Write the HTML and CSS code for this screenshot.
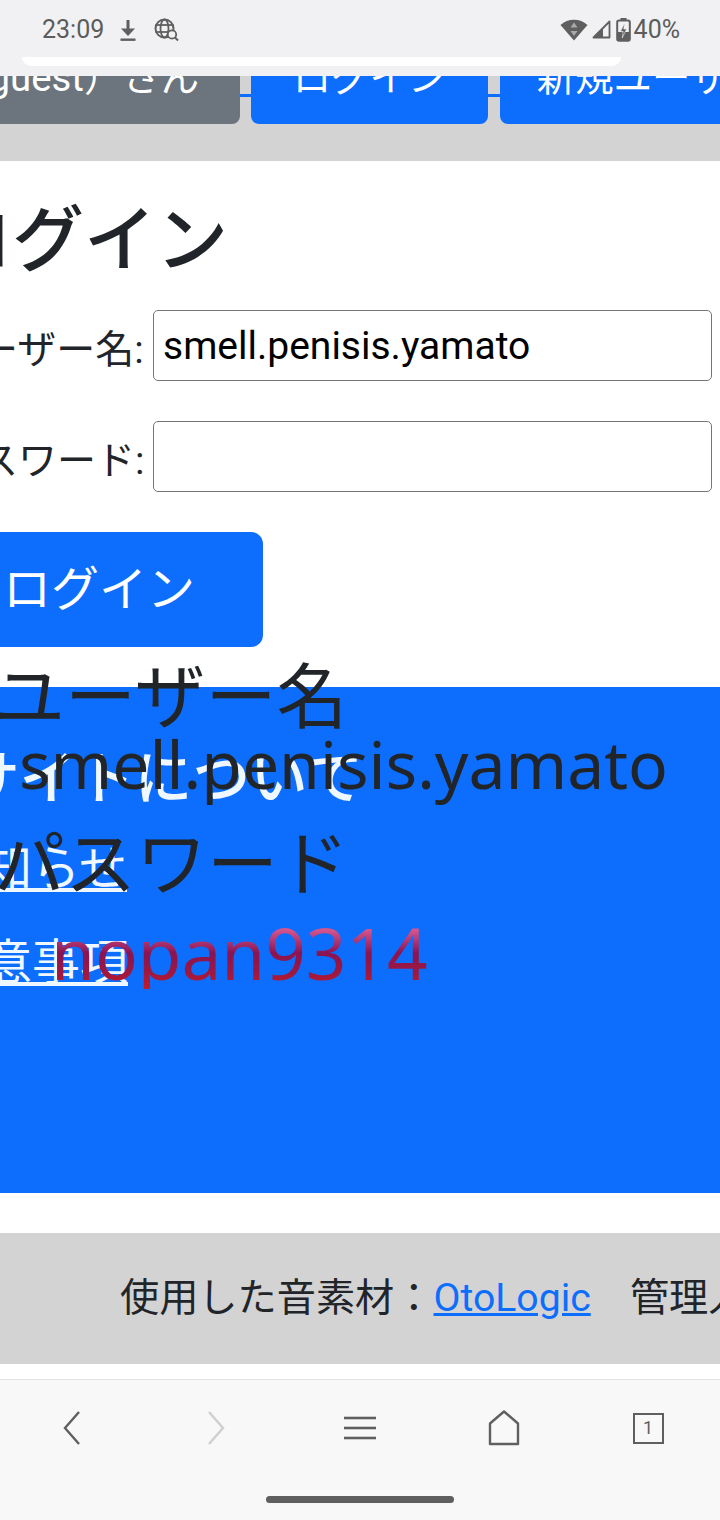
FILE: index.html
```html
<!DOCTYPE html>
<html lang="ja">
<head>
    <meta charset="UTF-8">
    <meta name="viewport" content="width=device-width, initial-scale=1.0">
    <title>ログイン</title>
    <link rel="stylesheet" href="styles.css">
</head>
<body>
    <div class="screen">
        <div class="statusbar">
            <div class="status-row">
                <span class="clock">23:09</span>
                <svg class="sicon" width="22" height="24" viewBox="0 0 22 24">
                    <rect x="9.5" y="2" width="3" height="11" fill="#5f5f5f"/>
                    <polygon points="4,10.5 18,10.5 11,18" fill="#5f5f5f"/>
                    <rect x="3.5" y="20.5" width="15" height="2.4" fill="#5f5f5f"/>
                </svg>
                <svg class="sicon globe" width="25" height="24" viewBox="0 0 25 24">
                    <circle cx="10.5" cy="10.5" r="9" fill="none" stroke="#5f5f5f" stroke-width="2"/>
                    <ellipse cx="10.5" cy="10.5" rx="4" ry="9" fill="none" stroke="#5f5f5f" stroke-width="1.8"/>
                    <line x1="1.5" y1="7" x2="19.5" y2="7" stroke="#5f5f5f" stroke-width="1.8"/>
                    <line x1="1.5" y1="14" x2="19.5" y2="14" stroke="#5f5f5f" stroke-width="1.8"/>
                    <circle cx="18" cy="16.5" r="4.2" fill="#f1f1f3" stroke="#5f5f5f" stroke-width="1.8"/>
                    <line x1="21" y1="19.5" x2="24" y2="22.5" stroke="#5f5f5f" stroke-width="2"/>
                </svg>
                <span class="status-fill"></span>
                <svg class="sicon" width="28" height="22" viewBox="0 0 28 22">
                    <path d="M0.5 6 A20 20 0 0 1 27.5 6 L14 21.5 Z" fill="#5f5f5f"/>
                    <polygon points="14,3.5 10.5,8.5 17.5,8.5" fill="#a9a9a9"/>
                    <polygon points="14,17 10.5,12 17.5,12" fill="#a9a9a9"/>
                </svg>
                <svg class="sicon signal" width="19" height="19" viewBox="0 0 19 19">
                    <path d="M17.5 1.5 L17.5 17.5 L1.5 17.5 Z" fill="none" stroke="#5f5f5f" stroke-width="1.8" stroke-linejoin="round"/>
                    <path d="M11 8 L11 17.5 L1.5 17.5 Z" fill="#5f5f5f"/>
                </svg>
                <svg class="sicon battery-icon" width="15" height="24" viewBox="0 0 15 24">
                    <rect x="4.5" y="0" width="6" height="3" fill="#5f5f5f"/>
                    <rect x="1.2" y="2.6" width="12.6" height="20.2" rx="1.8" fill="none" stroke="#5f5f5f" stroke-width="2"/>
                    <rect x="2" y="14" width="11" height="8" fill="#5f5f5f"/>
                    <path d="M8.6 5 L4.4 13.6 L7.2 13.6 L6.2 20 L10.6 11 L7.8 11 Z" fill="#5f5f5f" stroke="#f1f1f3" stroke-width="0.6"/>
                </svg>
                <span class="battery">40%</span>
            </div>
            <div class="urlbar-edge"></div>
        </div>

        <div class="viewport">
            <div class="page">
                <header class="topnav">
                    <a class="btn btn-secondary btn-user" href="#">ゲスト（guest）さん</a>
                    <span class="sep"></span>
                    <a class="btn btn-primary btn-login" href="#">ログイン</a>
                    <span class="sep wide"></span>
                    <a class="btn btn-primary btn-signup" href="#">新規ユーザー登録</a>
                </header>

                <main class="login">
                    <h2>ログイン</h2>
                    <form class="login-form">
                        <div class="form-row">
                            <label for="username">ユーザー名:</label>
                            <input type="text" id="username" value="smell.penisis.yamato">
                        </div>
                        <div class="form-row">
                            <label for="password">パスワード:</label>
                            <input type="password" id="password">
                        </div>
                        <button type="button" class="btn btn-primary btn-lg">ログイン</button>
                    </form>
                </main>

                <section class="info">
                    <h4>サイトについて</h4>
                    <a href="#">お知らせ</a>
                    <a href="#">注意事項</a>
                </section>

                <footer class="credits">
                    使用した音素材：<a href="#">OtoLogic</a>　管理人：やまと
                </footer>
            </div>

            <div class="reveal">
                <div class="reveal-label">ユーザー名</div>
                <div class="reveal-value">smell.penisis.yamato</div>
                <div class="reveal-label second">パスワード</div>
                <div class="reveal-value secret">nopan9314</div>
            </div>
        </div>

        <div class="toolbar">
            <div class="toolbar-row">
                <svg width="24" height="36" viewBox="0 0 24 36">
                    <polyline points="19,2 5,18 19,34" fill="none" stroke="#5f5f5f" stroke-width="2.4"/>
                </svg>
                <svg width="24" height="36" viewBox="0 0 24 36">
                    <polyline points="5,2 19,18 5,34" fill="none" stroke="#cfcfcf" stroke-width="2.4"/>
                </svg>
                <svg width="34" height="26" viewBox="0 0 34 26">
                    <line x1="1" y1="3" x2="33" y2="3" stroke="#5f5f5f" stroke-width="2.6"/>
                    <line x1="1" y1="13" x2="33" y2="13" stroke="#5f5f5f" stroke-width="2.6"/>
                    <line x1="1" y1="23" x2="33" y2="23" stroke="#5f5f5f" stroke-width="2.6"/>
                </svg>
                <svg width="32" height="36" viewBox="0 0 32 36">
                    <path d="M2 34 V13.5 L16 1.5 L30 13.5 V34 Z" fill="none" stroke="#5f5f5f" stroke-width="2.4" stroke-linejoin="round"/>
                </svg>
                <span class="tabs">1</span>
            </div>
            <div class="home-pill"></div>
        </div>
    </div>
</body>
</html>
```

FILE: styles.css
```css
html, body {
    margin: 0;
    padding: 0;
    overflow: hidden;
}
body {
    font-family: Roboto, "Noto Sans CJK JP", sans-serif;
    color: #212529;
    background-color: #ffffff;
}
.screen {
    width: 720px;
    height: 1520px;
    display: flex;
    flex-direction: column;
    overflow: hidden;
}

/* android status bar */
.statusbar {
    height: 76px;
    flex: none;
    background-color: #f1f1f3;
}
.status-row {
    height: 57px;
    display: flex;
    align-items: center;
    padding: 2px 40px 0 42px;
    box-sizing: border-box;
    color: #5c5c5c;
    font-size: 25px;
}
.clock {
    margin-right: 13px;
}
.sicon {
    flex: none;
}
.globe {
    margin-left: 15px;
}
.status-fill {
    flex: 1;
}
.signal {
    margin-left: 4px;
}
.battery-icon {
    margin-left: 5px;
}
.battery {
    margin-left: 3px;
}
.urlbar-edge {
    margin: 0 99px 0 22px;
    height: 9px;
    background-color: #ffffff;
    border-radius: 0 0 12px 12px;
}

/* page */
.viewport {
    flex: 1;
    position: relative;
    overflow: hidden;
    background-color: #ffffff;
}
.page {
    margin-top: -60px;
    margin-left: -60px;
    width: 840px;
}
.btn {
    display: inline-block;
    box-sizing: border-box;
    font-size: 38.4px;
    line-height: 57.6px;
    padding: 15.4px 0;
    border: 2.4px solid transparent;
    border-radius: 8px;
    color: #ffffff;
    text-align: center;
    text-decoration: none;
    white-space: nowrap;
    font-family: Roboto, "Noto Sans CJK JP", sans-serif;
}
.btn-secondary {
    background-color: #6c757d;
}
.btn-primary {
    background-color: #0d6efd;
}
.topnav {
    display: flex;
    align-items: flex-start;
    padding: 16px 0 37px;
    background-color: #d3d3d3;
}
.btn-user {
    width: 446px;
    margin-left: -146px;
    flex: none;
}
.btn-login {
    width: 237px;
    flex: none;
}
.btn-signup {
    width: 380px;
    flex: none;
}
.sep {
    flex: none;
    width: 11px;
    height: 3px;
    margin-top: 62px;
    background-color: #0d6efd;
}
.sep.wide {
    width: 12px;
}

.login {
    padding: 34px 0 40px;
}
.login h2 {
    margin: 0 0 23px;
    font-size: 72px;
    font-weight: 500;
    line-height: 92px;
}
.form-row {
    display: flex;
    align-items: center;
    margin-bottom: 40px;
}
.form-row label {
    font-size: 39px;
    width: 213px;
    flex: none;
}
.form-row input {
    width: 559px;
    height: 71px;
    box-sizing: border-box;
    padding: 0 9px;
    border: 1.5px solid #767676;
    border-radius: 5px;
    font-family: Roboto, sans-serif;
    font-size: 39px;
    color: #000000;
}
.btn-lg {
    font-size: 48px;
    line-height: 72px;
    padding: 19.4px 66px;
    margin-left: -5px;
    border-radius: 12px;
    cursor: pointer;
}

.info {
    height: 506px;
    box-sizing: border-box;
    padding-top: 58px;
    background-color: #0d6efd;
    color: #f0f8ff;
}
.info h4 {
    margin: 0 0 19px 22px;
    font-size: 57.6px;
    font-weight: 500;
    line-height: 69px;
}
.info a {
    display: block;
    margin: 0 0 22px -4px;
    font-size: 48px;
    line-height: 72px;
    color: #f0f8ff;
}

.credits {
    margin-top: 40px;
    padding: 36.5px 0 36.5px 180px;
    background-color: #d3d3d3;
    font-size: 39.2px;
    line-height: 57.6px;
    white-space: nowrap;
}
.credits a {
    color: #0d6efd;
}

/* credentials drawn over the page */
.reveal {
    position: absolute;
    left: 0;
    top: 584px;
    font-family: "Noto Sans", "Noto Sans CJK JP", sans-serif;
    color: #212529;
    white-space: nowrap;
}
.reveal-label {
    font-size: 71px;
    line-height: 70px;
    margin-left: -6px;
}
.reveal-label.second {
    margin-top: 31px;
}
.reveal-value {
    font-size: 66px;
    line-height: 66px;
    margin-left: 19px;
}
.reveal-value.secret {
    display: inline-block;
    margin-top: 20px;
    margin-left: 51px;
    font-size: 71px;
    line-height: 72px;
    background: linear-gradient(to bottom, #d4558e 18%, #8a1452 50%, #9c1842 76%, #c41a26 100%);
    -webkit-background-clip: text;
    background-clip: text;
    color: transparent;
}

/* browser toolbar */
.toolbar {
    flex: none;
    height: 141px;
    box-sizing: border-box;
    border-top: 1px solid #e2e2e2;
    background-color: #f8f8f8;
}
.toolbar-row {
    height: 96px;
    display: grid;
    grid-template-columns: repeat(5, 1fr);
    align-items: center;
    justify-items: center;
}
.tabs {
    width: 31px;
    height: 31px;
    box-sizing: border-box;
    border: 2.4px solid #5f5f5f;
    font-size: 18px;
    line-height: 26px;
    text-align: center;
    color: #5f5f5f;
}
.home-pill {
    width: 188px;
    height: 7px;
    margin: 20px auto 0;
    border-radius: 4px;
    background-color: #5f5f5f;
}
```
